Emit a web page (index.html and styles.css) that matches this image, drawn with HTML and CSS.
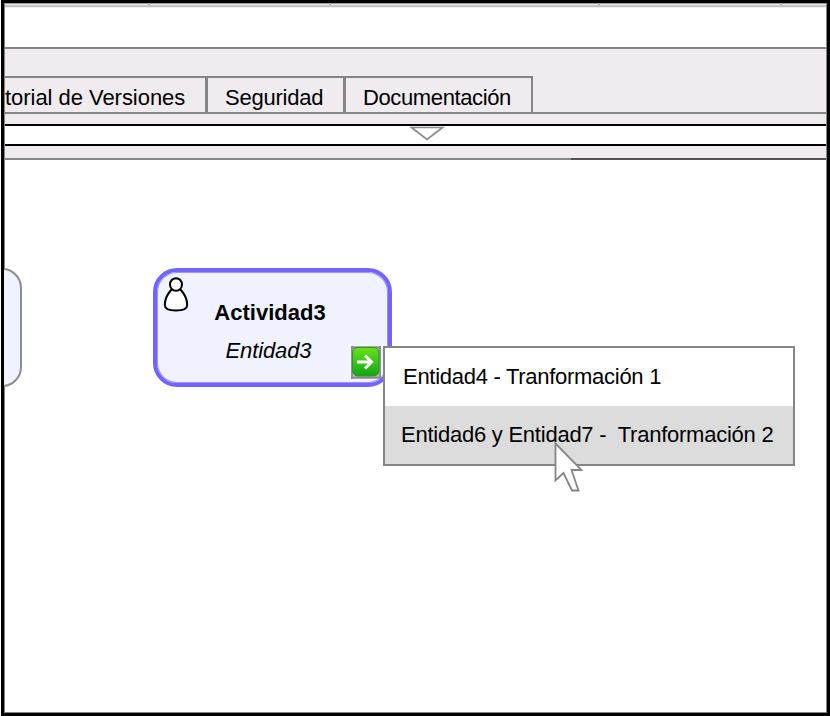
FILE: index.html
```html
<!DOCTYPE html>
<html lang="es">
<head>
<meta charset="utf-8">
<title>Actividades</title>
<link rel="stylesheet" href="styles.css">
</head>
<body>
<div class="frame">
  <div class="ruler"><i></i><i></i><i></i><i></i></div>
  <div class="blank"></div>
  <div class="tabbar">
    <div class="tab first"><span>torial de Versiones</span></div>
    <div class="tab second"><span>Seguridad</span></div>
    <div class="tab third"><span>Documentación</span></div>
  </div>
  <div class="gap"></div>
  <div class="splitter">
    <svg width="36" height="16" viewBox="0 0 36 16"><path d="M2.500 2.500H33.500L18 14.500Z" fill="#fff" stroke="#8b8b8b" stroke-width="1.700"/></svg>
  </div>
  <div class="strip"><i></i></div>
  <div class="canvas">
    <div class="node-cut"></div>
    <div class="node">
      <svg class="user" width="28" height="38" viewBox="0 0 28 38"><path d="M9.500 13.500C5.500 18 2.800 24 2.800 29C2.800 33 8 34.500 14 34.500C20 34.500 25.200 33 25.200 29C25.200 24 22.500 18 18.500 13.500" fill="#fff" stroke="#000" stroke-width="2"/><ellipse cx="14" cy="8.500" rx="6" ry="6.300" fill="#fff" stroke="#000" stroke-width="2"/></svg>
      <b>Actividad3</b>
      <em>Entidad3</em>
    </div>
    <svg class="go" width="30" height="33" viewBox="0 0 30 33">
      <defs><linearGradient id="g" x1="0" y1="0" x2="0" y2="1"><stop offset="0" stop-color="#6be01c"/><stop offset=".5" stop-color="#3cc619"/><stop offset="1" stop-color="#10a413"/></linearGradient></defs>
      <rect width="30" height="33" fill="#b7b9b5"/>
      <path d="M0 1.500H30M0 31.500H30M1 0V33M29 0V33" stroke="#858585" stroke-width="1.500" fill="none"/>
      <rect x="1.500" y="1.500" width="26.500" height="28.500" rx="5.500" fill="url(#g)" stroke="#299b22"/>
      <path d="M6 16H21M14 9.500L20.500 16L14 22.500" stroke="#fff" stroke-width="3" fill="none"/>
    </svg>
    <div class="menu">
      <div class="item"><span>Entidad4 - Tranformación 1</span></div>
      <div class="item active"><span>Entidad6 y Entidad7 -&nbsp; Tranformación 2</span></div>
    </div>
    <svg class="cursor" width="32" height="54" viewBox="0 0 32 54"><path d="M2.500 2.500V39.500L10.500 32L19 49.500H25.500L18.500 29H28.500Z" fill="#fff" stroke="#858585" stroke-width="1.800"/></svg>
  </div>
</div>
</body>
</html>
```
FILE: styles.css
```css
* { box-sizing: border-box; }
body { margin: 0; background: #fff; font: 22px/26px "Liberation Sans", Arial, sans-serif; color: #000; }
.frame { width: 829px; height: 716px; margin-left: 1px; border: 3px solid #000; display: flex; flex-direction: column; overflow: hidden; box-shadow: inset 1px 1px #858585, inset -1px -1px #858585; padding: 0 1px 1px; }
.ruler { flex: 0 0 5px; background: linear-gradient(#999 0 1px, #ececec 1px 2px, #c4c4c4 2px 4px, #eee 4px); display: grid; grid-template-columns: 145px 181px 269px 182px 1fr; }
.ruler i { border-right: 2px solid #aaa; height: 2px; }
.blank { flex: 0 0 39px; }
.tabbar { flex: 0 0 67px; display: flex; background: #efebee; border-top: 2px solid #858585; border-bottom: 2px solid #858585; padding-top: 27px; }
.tab { height: 36px; border-top: 2px solid #858585; border-right: 3px solid #858585; padding-top: 7px; white-space: pre; }
.first { width: 203px; letter-spacing: -.04px; }
.second { width: 138px; padding-left: 17px; letter-spacing: -.22px; }
.third { width: 187px; padding-left: 17px; border-right-width: 2px; letter-spacing: -.38px; }
.gap { flex: 0 0 10px; background: #efebee; }
.splitter { flex: 0 0 22px; border-top: 2px solid #000; border-bottom: 2px solid #000; padding-left: 404px; }
.splitter svg { display: block; margin-top: -1px; }
.strip { flex: 0 0 14px; min-height: 0; height: 14px; background: #efebee; box-shadow: inset 0 -2px #858585; padding-top: 12px; }
.strip i { display: block; height: 2px; margin-left: 566px; background: #535153; }
.canvas { flex: 1; position: relative; }
.node-cut { position: absolute; left: -45px; top: 108px; width: 62px; height: 119px; background: #f0f3ff; border: 2px solid #8c8c8c; border-radius: 20px; }
.node { position: absolute; left: 148px; top: 108px; width: 239px; height: 119px; background: #f0f3ff; border: 4px solid #7464ff; border-radius: 24px; box-shadow: inset 0 0 0 1px #9b90ff; display: flex; flex-direction: column; align-items: center; padding-top: 28px; gap: 12px; }
.user { position: absolute; left: 5px; top: 4px; }
.node b { margin-left: -5px; }
.node em { margin-left: -8px; letter-spacing: -.12px; }
.go { position: absolute; left: 346px; top: 186px; }
.menu { position: absolute; left: 378px; top: 186px; width: 412px; height: 120px; border: 2px solid #858585; background: #fff; }
.item { height: 58px; padding: 16px 0 0 18px; white-space: pre; letter-spacing: -.28px; }
.active { background: #dcdcdc; padding-left: 16px; letter-spacing: -.24px; }
.cursor { position: absolute; left: 548px; top: 281px; }
```
